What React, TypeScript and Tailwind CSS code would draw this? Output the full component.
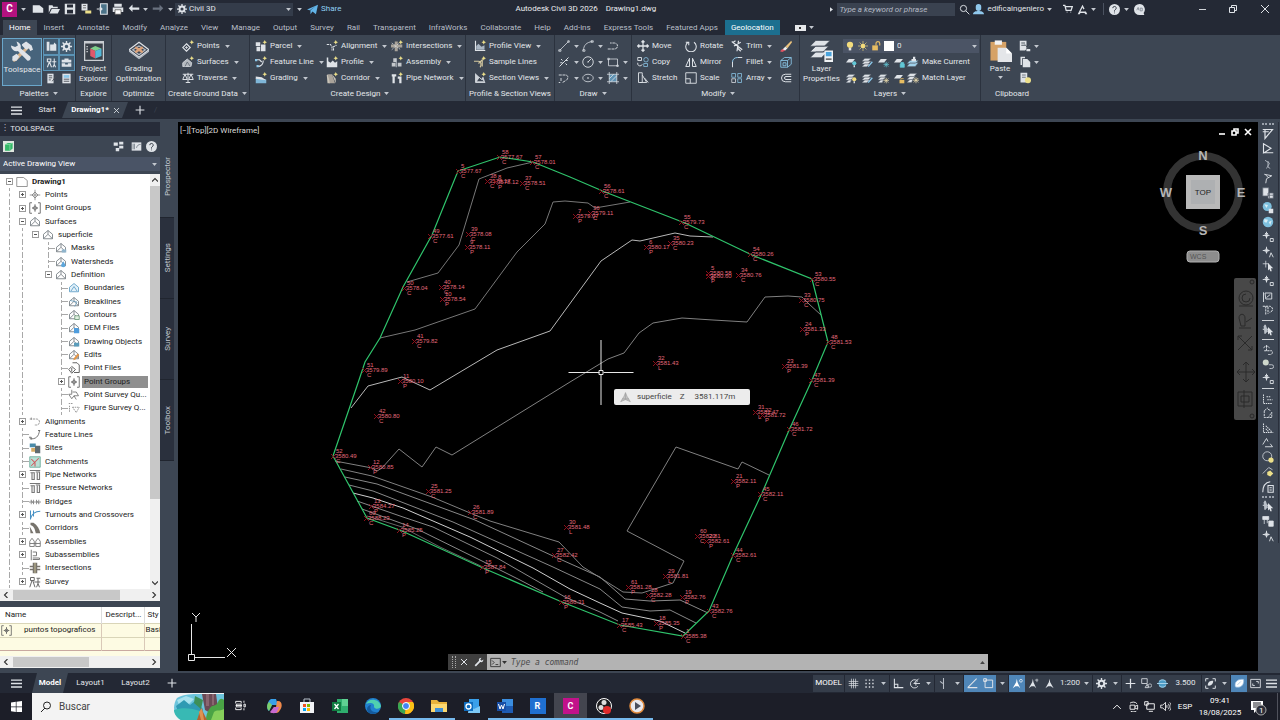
import React from 'react';
import clsx from 'clsx';

type IconProps = { name: string; className?: string };

const W = '#dfe3e8';
const B = '#8cc8ea';
const Y = '#ecdf8a';
const D = '#5b6470';

const spark = <path d="M13 0l1 2 2 1-2 1-1 2-1-2-2-1 2-1z" fill={Y} />;
const mound = (
  <path d="M2 13V7l6-5 6 5v6zM2 13l6-6 6 6M8 2v5" fill="none" stroke="#7b8288" strokeWidth="1.2" />
);
const star = <path d="M8 1v14M1 8h14M5 5l3-3 3 3-3 3zM5 11l3 3 3-3" fill="none" stroke={W} strokeWidth="1.2" />;

const icons: Record<string, React.ReactNode> = {
  new: <path d="M1 3h9l5 4v6H1z" fill={W} />,
  open: <path d="M1 13V3h5l1 2h6v2H4zM5 8h11l-3 6H2z" fill={W} />,
  save: <path d="M1 1h14v14H1zM4 2v4h8V2zM4 9v5h8V9z" fill={W} fillRule="evenodd" />,
  saveAs: (
    <>
      <path d="M2 1h8v9H2z" fill={W} />
      <path d="M4 3h4v1H4zM4 6h4v1H4z" fill="#555" />
      <path d="M7 10h8v4H7z" fill={Y} />
    </>
  ),
  web: <path d="M6 1h9v14H6zM1 8h7M5 5l3 3-3 3" fill="#4b7389" stroke={W} strokeWidth="1.5" />,
  print: (
    <>
      <path d="M3 1h10v4H3zM1 6h14v6H1z" fill={W} />
      <path d="M4 9h8v6H4z" fill="#fff" stroke="#555" />
    </>
  ),
  undo: <path d="M6 2L1 7l5 5V9h9V6H6z" fill={W} />,
  redo: <path d="M10 2l5 5-5 5V9H1V6h9z" fill="#69717f" />,
  gear: (
    <>
      <circle cx="8" cy="8" r="4" fill="none" stroke={W} strokeWidth="3" />
      <path d="M8 0v3M8 13v3M0 8h3M13 8h3M2.3 2.3l2 2M11.7 11.7l2 2M13.7 2.3l-2 2M4.3 11.7l-2 2" stroke={W} strokeWidth="2" />
    </>
  ),
  send: <path d="M0 8L16 1l-3 14-5-4-3 4V9l8-6-9 6z" fill="#62b4e8" />,
  search: <path d="M10 10l5 5M6.5 11a4.5 4.5 0 1 0 0-9 4.5 4.5 0 0 0 0 9z" fill="none" stroke={W} strokeWidth="1.4" />,
  user: <path d="M4 4a4 4 0 0 1 8 0v2a4 4 0 0 1-8 0zM0 15c0-4 4-5 8-5s8 1 8 5z" fill="#8fc7ec" />,
  cart: <path d="M0 2h3l2 8h8l2-6H4M6 13h1M12 13h1" fill="none" stroke={W} strokeWidth="2" />,
  autodesk: <path d="M8 1l3 6-2 1-1-3-3 6h8l2 4h-3l-1-2H5l-1 2H1z" fill={W} />,
  help: (
    <>
      <circle cx="8" cy="8" r="8" fill={W} />
      <path d="M5.5 6a2.5 2.5 0 1 1 3.5 2.3L8 9.5V11M8 12.5v1" fill="none" stroke="#2a303c" strokeWidth="1.3" />
    </>
  ),
  assistant: (
    <>
      <path d="M8 0a8 8 0 1 0 0 16h7l-1-3A8 8 0 0 0 8 0z" fill={W} />
      <path d="M4 9l2-4 1 4M9 6v4h3V6z" fill="none" stroke="#6d7580" />
    </>
  ),
  toolspace: (
    <>
      <path d="M11 5l2 1L4 15l-2 1-1-2z" fill="#d9b48b" />
      <path d="M8 3l3-2 4 3 1 3-2 1-1-2-2 1-3-3z" fill={W} />
      <path d="M4 1a4 4 0 0 1 3 5l7 6a2 2 0 0 1-2 3L5 8a4 4 0 0 1-5-4l3 1 2-1z" fill={W} />
      <path d="M1 12l3-2 2 2-2 3H1z" fill={W} />
    </>
  ),
  panorama: <path d="M1 1h4v13H1zM6 5h9v9H6zM10 8l2-6 3 3z" fill={W} />,
  survey: <path d="M2 3h5v4H2zM5 7l-3 8M5 7l3 8M12 2v3M9 7h6M12 5v6l-2 4M12 11l2 4" fill="none" stroke={W} strokeWidth="1.6" />,
  toolbox: <path d="M5 4V2h6v2h4v4H1V4zM1 9h5v2h4V9h5v5H1z" fill={W} />,
  notes: (
    <>
      <path d="M2 1h9v14H2z" fill={W} />
      <path d="M4 4h5M4 7h5M4 10h3M9 12l6-8" stroke="#4a4f57" strokeWidth="1.3" />
    </>
  ),
  props: (
    <>
      <path d="M2 1h12v14H2z" fill={W} />
      <path d="M4 3h8v4H4z" fill={B} />
      <path d="M4 9h8M4 12h8" stroke="#4a4f57" strokeWidth="1.3" />
    </>
  ),
  explorer: (
    <>
      <path d="M0 0h16v16H0z" fill="#c9cdd2" />
      <path d="M1 2h14v13H1z" fill="#3a4049" />
      <path d="M2 4h1v1H2zM2 6h1v1H2zM2 8h1v1H2z" fill={W} />
      <path d="M5 6l4-2 5 2-5 2z" fill="#7fd08c" />
      <path d="M5 6l4 2v6l-4-2z" fill="#e0586b" />
      <path d="M14 6L9 8v6l5-2z" fill="#54b8d8" />
    </>
  ),
  grading: (
    <>
      <path d="M8 1l8 6-8 6-8-6z" fill="none" stroke={W} />
      <path d="M8 4l5 3-5 4-5-4zM0 8l8 6 8-6" fill="none" stroke="#b7bcc4" />
      <path d="M5 5l3 2 3-2M5 9l3-2 3 2" fill="none" stroke="#dba27a" strokeWidth="2" />
    </>
  ),
  points: (
    <>
      <path d="M6 5l5 5-5 5-5-5z" fill="none" stroke={W} strokeWidth="1.5" />
      <path d="M4 10h4M6 8v4" stroke={W} />
      {spark}
    </>
  ),
  surfaces: (
    <>
      <path d="M1 14V9l6-5 6 5-1 5z" fill="#b3b8be" stroke={W} />
      <path d="M4 14l3-6 4 6" fill="none" stroke={D} />
      {spark}
    </>
  ),
  traverse: <path d="M1 3h14M8 1v13M5 14h6M4 3L1 10h6zM12 3l-3 7h6z" fill="none" stroke={W} strokeWidth="1.3" />,
  parcel: (
    <>
      <path d="M1 3h6v5H1zM8 6h6v9H8zM2 9h5v6H2z" fill={W} />
      {spark}
    </>
  ),
  feature: (
    <>
      <path d="M1 5h5l3 3M3 14c6 0 8-3 8-8" fill="none" stroke={W} strokeWidth="1.5" />
      <path d="M0 4h3v3H0zM2 12h3v3H2z" fill={B} />
      {spark}
    </>
  ),
  slope: (
    <>
      <path d="M1 8l14 2v5H1z" fill="#7fb6d8" />
      <path d="M1 6l8 1 6 4-14-2z" fill={W} />
      {spark}
    </>
  ),
  alignment: (
    <>
      <path d="M1 6h5l2 3v5M10 14V9l4-2" fill="none" stroke={W} strokeWidth="1.4" strokeDasharray="3 1" />
      {spark}
    </>
  ),
  profile: (
    <>
      <path d="M1 2v13h14V7l-3 2-3-3-3 3-3-2V2z" fill={W} />
      {spark}
    </>
  ),
  corridor: (
    <>
      <path d="M3 3h5l4 12H4z" fill="#a9a39a" />
      <path d="M1 4l2-1 2 12H2zM8 3l5 6v6z" fill="#c8c3b8" />
      {spark}
    </>
  ),
  intersect: (
    <>
      <path d="M5 2h4v13H5zM0 6h15v4H0z" fill="#a9a39a" />
      <path d="M1 4l12 9M1 13L12 3" stroke={W} strokeDasharray="2 1" />
      {spark}
    </>
  ),
  assembly: (
    <>
      <path d="M1 9h5v5H1zM9 9h5v5H9zM3 3h4v5H3z" fill="#c3c7cb" />
      <path d="M7 3v12" stroke={W} />
      {spark}
    </>
  ),
  pipe: (
    <>
      <path d="M1 3h6v3H5v9H2V6H1zM9 6h5v9h-3V9H9z" fill={W} />
      {spark}
    </>
  ),
  profileView: (
    <>
      <path d="M2 1v13h13" fill="none" stroke={W} strokeWidth="1.5" />
      <path d="M3 13V8l3-3 4 4 4-2v6z" fill="#a9b6c4" />
      {spark}
    </>
  ),
  sample: (
    <>
      <path d="M0 7h6c4 0 4 6 2 8M6 10l5-5v9" fill="none" stroke="#d5c9a0" strokeWidth="1.5" />
      {spark}
    </>
  ),
  section: (
    <>
      <path d="M2 2v12h13M3 13l4-6 3 3 2-3 2 6z" fill="#cdd2d8" stroke={W} />
      {spark}
    </>
  ),
  line: <path d="M2 14L14 2M1 13h3v2H1zM13 1h2v2h-2z" fill="none" stroke={W} />,
  arc: <path d="M2 14C2 7 6 3 14 2M1 13h3v2H1zM12 1h3v2h-3z" fill="none" stroke={W} />,
  pline: <path d="M1 12h9a4 4 0 0 0 0-8H4" fill="none" stroke={W} strokeWidth="1.2" strokeDasharray="4 1" />,
  xline: <path d="M2 14L14 2M4 4l2 2M10 10l2 2M3 9h3M10 6h3" fill="none" stroke={W} strokeWidth="1.3" />,
  circle: <path d="M8 1a7 7 0 1 0 0 14A7 7 0 0 0 8 1zM8 8l4-4M7 8h2" fill="none" stroke={W} strokeWidth="1.2" />,
  rect: <path d="M2 4h12v9H2zM1 3h2v2H1zM13 12h2v2h-2z" fill="none" stroke={W} />,
  spline: <path d="M1 4h9c4 0 4 5 1 7l-5 3M1 14h2M4 8v5" fill="none" stroke={W} strokeDasharray="4 1" strokeWidth="1.2" />,
  ellipse: (
    <>
      <ellipse cx="8" cy="8" rx="7" ry="5" fill="none" stroke={W} />
      <path d="M8 7v2M7 8h2" stroke={W} />
    </>
  ),
  hatch: (
    <>
      <path d="M3 3h10v10H3z" fill="#5f93b4" />
      <path d="M0 3h16M0 13h16M3 0v16M13 0v16M3 9l6-6M5 13l8-8" stroke={W} fill="none" />
    </>
  ),
  move: <path d="M8 1v14M1 8h14M6 3l2-2 2 2M6 13l2 2 2-2M3 6L1 8l2 2M13 6l2 2-2 2" fill="none" stroke={W} strokeWidth="1.7" />,
  copy: (
    <>
      <path d="M1 2h5v4H1zM1 9a3 3 0 1 0 6 2" fill="none" stroke={W} strokeWidth="1.2" />
      <circle cx="12" cy="5" r="3" fill="none" stroke={B} />
      <path d="M9 10h5v4H9z" fill="none" stroke={B} />
    </>
  ),
  stretch: <path d="M2 1v13h5V1zM7 4l6 10H4M10 8l5 6" fill="none" stroke={W} strokeWidth="1.2" />,
  rotate: <path d="M4 3a7 7 0 1 0 8 0M1 3h4v4" fill="none" stroke={W} strokeWidth="1.4" />,
  mirror: <path d="M6 3v11H1zM10 3v11h5z" fill="none" stroke={W} strokeWidth="1.3" />,
  scale: <path d="M1 1h14v14H1zM1 9h6v6" fill="none" stroke={W} strokeWidth="1.2" />,
  trim: <path d="M1 2l14 11M10 1L8 15M13 3l-9 5M3 3l3-2M9 11l4 4" fill="none" stroke={W} strokeWidth="1.6" />,
  fillet: (
    <>
      <path d="M2 15V8M9 2h6" stroke={W} strokeWidth="1.3" />
      <path d="M2 8c0-4 3-6 7-6" fill="none" stroke={B} strokeWidth="1.3" />
    </>
  ),
  array: (
    <>
      <path d="M1 9h5v5H1z" fill="none" stroke={W} />
      <path d="M1 2h5v5H1zM9 2h5v5H9zM9 9h5v5H9z" fill="none" stroke={B} />
    </>
  ),
  erase: (
    <>
      <path d="M15 1L7 9l3 2 6-8z" fill="#e9c27d" />
      <path d="M7 9l3 2-3 3-4-1z" fill="#f0f0f0" />
      <path d="M3 12l4 2-4 2-3-1z" fill="#dd5564" />
    </>
  ),
  cube: <path d="M1 6h9v9H1zM1 6l5-4h9v9l-5 4M15 2l-5 4M4 9h4v4H4z" fill="none" stroke={B} strokeWidth="1.1" />,
  offset: <path d="M15 3H7a5 5 0 0 0 0 10h8M15 6H8a2 2 0 0 0 0 4h7" fill="none" stroke={W} strokeWidth="1.3" />,
  layers: (
    <>
      <path d="M4 1h10l-4 4H0zM4 5h9l-4 4H0zM4 9h8l-4 4H0z" fill={W} stroke="#3d4653" strokeWidth=".5" />
      <path d="M10 8h6v8h-6z" fill="#f1f3f5" />
      <path d="M11 9h4v3h-4z" fill="#4aa3dc" />
      <path d="M11 14h4" stroke="#555" />
    </>
  ),
  bulb: (
    <>
      <circle cx="8" cy="6" r="5" fill="#f3dc7c" />
      <path d="M6 11h4v4H6z" fill="#e0e0e0" />
    </>
  ),
  sun: (
    <>
      <circle cx="8" cy="8" r="3.5" fill="#f3dc7c" />
      <path d="M8 0v16M0 8h16M2.5 2.5l11 11M13.5 2.5l-11 11" stroke="#f3dc7c" />
    </>
  ),
  lock: (
    <>
      <path d="M2 7h9v8H2z" fill="#e7bd62" />
      <path d="M8 7V4a3 3 0 0 1 6 0v3" fill="none" stroke="#e7bd62" strokeWidth="1.8" />
    </>
  ),
  swatch: <path d="M0 0h16v16H0z" fill="#fff" />,
  lyA: <><path d="M4 3h9l-4 5H0z" fill={W} /><circle cx="12" cy="9" r="3" fill="#62c7d6" /><path d="M11 12h2v3h-2z" fill={W} /></>,
  lyB: <><path d="M4 2h9l-4 4H0zM4 6h9l-4 4H0zM4 10h7l-4 4H0z" fill={W} stroke={D} strokeWidth=".6" /><path d="M9 14l6-7" stroke={B} strokeWidth="2" /></>,
  lyC: <><path d="M4 3h9l-4 5H0z" fill={W} /><path d="M12 7v8M8 11h8M9 8l6 6M15 8l-6 6" stroke="#62c7d6" /></>,
  lyD: <><path d="M4 3h9l-4 5H0z" fill={W} /><path d="M9 10h6v5H9zM10 10V8h4v2" fill="#62c7d6" stroke="#62c7d6" /></>,
  lyE: <><path d="M4 9h11l-4 5H0zM4 6h11l-4 4H0z" fill="#9fd0ea" stroke={D} strokeWidth=".6" /><path d="M6 4h6v3H6zM8 1h3v4H8z" fill={W} /></>,
  lyF: <><path d="M4 2h9l-4 4H0zM4 6h7l-4 4H0zM4 10h4l-2 4H0z" fill={W} stroke={D} strokeWidth=".6" /><circle cx="12" cy="9" r="3" fill="#f3dc7c" /><path d="M11 12h2v3h-2z" fill={W} /></>,
  lyG: <><path d="M4 2h9l-4 4H0zM4 6h7l-4 4H0zM4 10h4l-2 4H0z" fill={W} stroke={D} strokeWidth=".6" /><path d="M12 7v8M8 11h8M9 8l6 6M15 8l-6 6" stroke="#f0e0b0" /></>,
  lyH: <><path d="M4 3h9l-4 5H0z" fill={W} /><path d="M8 10h7v5H8z" fill="#e7bd62" /><path d="M10 10V8h4" fill="none" stroke="#e7bd62" /></>,
  paste: (
    <>
      <path d="M1 2h11v13H1z" fill="#d6a266" />
      <path d="M4 1h5v3H4z" fill="#f2f2f2" />
      <path d="M6 6h6l4 4v6H6z" fill="#e4e6e9" />
      <path d="M12 6v4h4z" fill="#fff" />
    </>
  ),
  cut: <><path d="M1 1h9v13H1z" fill={W} /><path d="M3 4h5M3 7h5M8 6l7 9M15 6l-7 9" stroke="#4d5560" strokeWidth="1.3" /><path d="M10 12h5v3h-5z" fill={W} /></>,
  copyclip: <path d="M2 1h6v2H4v9H2zM5 4h6l4 4v7H5z" fill={W} />,
  pasteSp: <><path d="M2 1h9v13H2z" fill={W} /><path d="M4 4h5M4 7h5" stroke="#4d5560" /><circle cx="12" cy="11" r="4" fill={Y} /></>,
  // toolspace tree
  dwg: <path d="M1 2h9l5 4v8H1z" fill="#fff" stroke="#777" />,
  tPoints: <path d="M8 1v14M1 8h14M8 4l4 4-4 4-4-4z" fill="none" stroke="#777" />,
  tGroups: <path d="M4 1H1v14h3M12 1h3v14h-3M8 3v10M4 8h8M8 5l3 3-3 3-3-3z" fill="none" stroke="#666" strokeWidth="1.2" />,
  tSurf: mound,
  tMask: <>{mound}<path d="M9 10h6v4H9z" fill="#8fb4cc" /></>,
  tWater: <>{mound}<path d="M11 7l3 5a3 3 0 1 1-6 0z" fill="#5ea7dc" /></>,
  tBound: <path d="M2 13V7l6-5 6 5v6zM4 12l4-6 4 6" fill="#e3f1fa" stroke="#4a91bd" />,
  tBreak: <>{mound}<path d="M3 6l9 2-3 6" fill="none" stroke="#5b93b5" /></>,
  tCont: <>{mound}<path d="M9 9h6v5H9z" fill="#dff0df" stroke="#5f8e6d" /></>,
  tDem: <>{mound}<path d="M8 8h5l2 2v5H8z" fill="#4f9ddd" /></>,
  tObj: <>{mound}<path d="M8 9h7v5H8z" fill="#5a9cbb" /></>,
  tEdit: <>{mound}<path d="M15 8l-5 6-3 1 1-3 5-6z" fill="#e29548" /></>,
  tFile: <path d="M6 1h6l3 3v10H8M1 10l4-4 5 4-5 5zM5 8v5" fill="none" stroke="#555" strokeWidth="1.2" />,
  tQuery: <path d="M5 1v6H1l4 6 3-4h6l-3-5H6M8 9l3 5" fill="none" stroke="#777" strokeWidth="1.2" />,
  tFigure: <path d="M1 2h6M2 5v9M6 7h9l-4 7z" fill="none" stroke="#777" strokeDasharray="2 1" />,
  tAlign: <path d="M1 4h9a4 4 0 0 1 0 8H7M3 2v4" fill="none" stroke="#777" strokeDasharray="3 1" />,
  tFeat: <path d="M1 13c8 1 12-3 13-11M0 11h3v3M12 2h3" fill="none" stroke="#666" strokeWidth="1.2" />,
  tSites: <><path d="M1 2h8v5H1z" fill="#4a8ba8" /><path d="M8 5h7v10H8z" fill="#5f6b70" /><path d="M3 8h5v5H3z" fill="#d5a962" /></>,
  tCatch: <><path d="M1 1h14v14H1z" fill="#b9e0d5" stroke="#5aa08e" /><path d="M3 13L13 3M3 4l5 5v5" stroke="#d0575c" strokeWidth="1.4" fill="none" /></>,
  tPipe: <path d="M1 2h14M2 5h5v9H4V5M9 4h5v10h-3V5" fill="none" stroke="#777" strokeWidth="1.5" />,
  tBridge: <path d="M0 8h16M3 5v6M6 5v6M10 5v6M13 5v6M3 6l3 4M10 6l3 4" fill="none" stroke="#777" />,
  tTurn: <path d="M2 2v12M2 13C4 6 8 3 15 3M6 2v8" fill="none" stroke="#4590c4" strokeWidth="1.4" />,
  tCorr: <path d="M2 1h4c5 3 8 8 9 14H9C8 9 6 5 2 4zM1 6l5 9H2z" fill="#77736c" />,
  tAsm: <path d="M1 14V7l3-4 3 4v7zM9 14V7l3-4 3 4v7zM1 10h14" fill="none" stroke="#777" strokeWidth="1.2" />,
  tSub: <path d="M3 1v14M5 4h5v5H5M5 12h9v2H5" fill="none" stroke="#777" strokeWidth="1.3" />,
  tInt: <><path d="M1 5h14v2H1zM1 9h14v2H1zM5 1h6v14H5z" fill="#77736c" /><path d="M8 1v14" stroke="#e0d5a0" /></>,
  tSurvey: <path d="M2 2h5v4H2zM4 6l-3 9M5 6l3 9M10 3h5M12 3v7l-2 5M12 10l2 5M7 8h8" fill="none" stroke="#666" strokeWidth="1.3" />,
  refresh: <><path d="M0 0h16v16H0z" fill="#dfe6df" /><path d="M3 5l4-2h7v8l-4 3H3z" fill="#35b868" /><path d="M3 5h7l4-2M10 5v9" stroke="#8fe0ae" fill="none" /></>,
  tree: <path d="M1 2h6v5H1zM9 1h6v4H9zM9 7h6v4H9zM4 10h5v5H4z" fill={W} />,
  panel: <><path d="M1 2h14v12H1z" fill={W} /><path d="M3 4v8M5 4v8M8 10c1-4 3-5 6-5" stroke={D} fill="none" /></>,
  // right toolbar
  r0: <path d="M1 2h13L4 14V2M1 5h8" fill="none" stroke={W} strokeWidth="1.6" />,
  r1: <path d="M2 14V1l10 6-9 6h12" fill="none" stroke={W} strokeWidth="1.5" />,
  r2: <path d="M4 3l6 4-4 7M8 4v8l3 2" fill="none" stroke="#aab1ba" strokeWidth="1.3" />,
  r3: <path d="M3 3l10 2-7 4-1 6M5 4l4 4" fill="none" stroke={W} strokeWidth="1.2" />,
  r4: <path d="M1 1h8v11H1zM8 8h7v7H8zM10 8v7M8 11h7" fill={W} stroke={D} />,
  r5: <><circle cx="7" cy="6" r="6" fill="#7ec0de" /><path d="M3 3l5 1-2 4z" fill="#d8edf5" /><path d="M9 9h6v6H9z" fill={W} /></>,
  r6: <><circle cx="8" cy="8" r="7" fill="#7ec0de" /><path d="M3 4l5 1-2 4-3-1zM9 8l4-2-2 6z" fill="#d8edf5" /></>,
  r7: <path d="M6 1v9M1 6h9M4 4l2-2 2 2-2 5zM11 10h4v4h-4z" fill="none" stroke={W} strokeWidth="1.2" />,
  r8: <path d="M6 1v9M1 6h9M6 3l3 3-3 3-3-3zM10 15l2-6 3 6" fill="none" stroke={W} strokeWidth="1.2" />,
  r9: <><path d="M5 1v9M1 5h8" stroke={W} /><path d="M8 4l7 7-3 0 1 4-2 0-1-3-2 2z" fill={W} /></>,
  r10: <path d="M2 3v13M4 4h9v8H5zM6 10l5-4" fill="none" stroke={W} strokeWidth="1.2" />,
  r11: <path d="M1 3h9a4 4 0 0 1 0 8M5 3v11M8 4v9" fill="none" stroke={W} strokeDasharray="3 1" strokeWidth="1.3" />,
  r12: <><path d="M4 1v12M1 7h8" stroke={W} strokeWidth="1.5" /><path d="M2 3l3-2 3 9-4 3z" fill="#b9c0c8" /><path d="M8 4l7 7-3 0 1 4-2 0-1-3-2 2z" fill={W} /></>,
  r13: <path d="M2 5l4-3 4 3M3 9h10a3 3 0 0 1-3 5H8M6 2v7" fill="none" stroke={W} strokeDasharray="3 1" strokeWidth="1.3" />,
  r14: <><circle cx="5" cy="6" r="4" fill="#cfd8cc" /><path d="M9 9h4a2 2 0 0 1 0 5h-3" fill="none" stroke={W} /></>,
  r15: <path d="M2 2v12h12M6 5h5M7 9h7" fill="none" stroke={W} strokeDasharray="2 1" strokeWidth="1.3" />,
  r16: <path d="M3 5v9h10V7l-4 6M3 5l5-4M8 3l4 2" fill="none" stroke={W} strokeDasharray="3 1" strokeWidth="1.2" />,
  r17: <path d="M2 2v12h13M5 5l8 8M5 9l4 4" fill="none" stroke={W} strokeDasharray="2 1" strokeWidth="1.4" />,
  r18: <path d="M1 10l5-8 2 4M4 13h10l-3-4" fill="none" stroke={W} strokeWidth="1.2" />,
  r19: <><circle cx="7" cy="7" r="6" fill="none" stroke={W} /><circle cx="12" cy="12" r="3.5" fill={Y} /></>,
  r20: <><path d="M1 10l8-8 5 3" fill="none" stroke={W} /><path d="M7 8l4-2 4 4-4 4-4-2z" fill={Y} /></>,
  r21: <path d="M1 15C1 7 4 2 11 1M8 6h7v9H8zM10 9h3M10 12h3" fill="none" stroke={W} strokeWidth="1.4" />,
  r22: <path d="M1 2h8v4H1zM3 6v6M7 6v5M9 8h6v7H9zM11 8v7M13 8v7" fill={W} stroke={W} />,
  // status bar
  grid: <path d="M5 1v14M11 1v14M1 5h14M1 11h14M8 1v14M1 8h14" stroke={W} fill="none" />,
  dots: <path d="M2 3h2M7 3h2M12 3h2M2 8h2M7 8h2M12 8h2M2 13h2M7 13h2M12 13h2" stroke={W} strokeWidth="2" />,
  ortho: <path d="M2 1v13h13M2 9h5v5" fill="none" stroke={W} strokeWidth="1.5" />,
  polar: <path d="M13 5a6 6 0 1 0 0 7M7 8h9M7 8l7-7M10 5v6" fill="none" stroke={W} strokeWidth="1.3" />,
  iso: <path d="M8 0v16M3 5l4 3" fill="none" stroke="#b8bec7" strokeWidth="1.5" />,
  track: <path d="M1 14L14 1M1 14h14" fill="none" stroke={W} strokeWidth="1.5" />,
  osnap: <path d="M3 3h11v11H3zM1 1h4v4H1z" fill="none" stroke={W} strokeWidth="1.4" />,
  ann: <path d="M8 1l1 5 5 9-4-3H6l-4 3 5-9z" fill={W} />,
  annVis: <><path d="M7 1l1 5 4 9-3-3H5l-4 3 5-9z" fill="#fff" /><circle cx="13" cy="4" r="2" fill="none" stroke="#fff" /></>,
  annAdd: <><path d="M7 1l1 5 4 9-3-3H5l-4 3 5-9z" fill={W} /><path d="M13 1l0 5M10 3h5" stroke={W} /></>,
  plus: <path d="M8 1v14M1 8h14" stroke={W} strokeWidth="1.8" />,
  shapes: <><path d="M1 1h8v7H1zM6 14l3-5 2 5z" fill="none" stroke={W} strokeWidth="1.2" /><circle cx="13" cy="11" r="2.5" fill="none" stroke={W} /></>,
  globe: <><circle cx="8" cy="8" r="6" fill="#4d9cc6" /><path d="M3 5c3-3 7-3 10 0M3 11c3 3 7 3 10 0M0 8h16" fill="none" stroke="#b4daee" strokeWidth="1.3" /></>,
  isolate: <><path d="M1 5V1h4M11 1h4v4M15 11v4h-4M5 15H1v-4" fill="none" stroke={W} strokeWidth="1.4" /><path d="M4 11c0-5 3-7 8-7 0 5-3 8-8 7z" fill={W} /></>,
  leaf: <path d="M2 13C0 6 5 1 14 2c1 8-4 13-12 11zM5 10l5-5" fill="#fff" stroke="#8fb8dd" />,
  screen: <path d="M1 2h14v12H1zM4 11V8M4 11h3M12 5v3M12 5H9" fill="none" stroke={W} strokeWidth="1.3" />,
  menu: <path d="M0 3h16M0 8h16M0 13h16" stroke={W} strokeWidth="2" />,
  wrench: <path d="M1 13l7-7c-1-3 1-5 4-5L10 4l2 2 3-2c0 3-2 5-5 4l-7 7z" fill={W} />,
  prompt: <path d="M1 2h14v12H1zM3 5l3 3-3 3M8 11h4" fill="none" stroke="#333" strokeWidth="1.3" />,
  tri: <path d="M8 1l2 5 5 8-7-3-7 3 5-8zM8 1v10M3 10h10" fill="#c2c2c2" stroke="#a2a2a2" />,
  // taskbar
  windows: <path d="M0 2l7-1v7H0zM8 1l8-1v8H8zM0 9h7v7l-7-1zM8 9h8v7H8z" fill="#fff" />,
  taskview: <path d="M1 2v3M1 2h8v3M1 14v-3M1 14h8v-3M1 8h9v0M13 1v3M13 6v4h2V6zM13 12v3M2 6h7v4H2z" fill="none" stroke="#fff" strokeWidth="1.3" />,
  copilot: <><path d="M5 1h5l2 6H6L3 13C0 12 1 3 5 1z" fill="#3aa0e8" /><path d="M11 3c5-1 6 5 3 9-1 2-2 3-4 3H5L8 9h2z" fill="#f08a4b" /><path d="M8 9h5l-2 5c-1 2-7 1-7 0z" fill="#c86ad0" /><path d="M3 4l3 3-3 6c-3-3-2-7 0-9z" fill="#7ccf6a" /></>,
  store: <><path d="M1 4h14v11H1z" fill="#f1f3f6" /><path d="M5 4V1h6v3" fill="none" stroke="#b8c2cc" /><path d="M4 6h3v3H4z" fill="#f25022" /><path d="M8 6h3v3H8z" fill="#7fba00" /><path d="M4 10h3v3H4z" fill="#00a4ef" /><path d="M8 10h3v3H8z" fill="#ffb900" /></>,
  excel: <><path d="M5 1h11v14H5z" fill="#2fae6e" /><path d="M10 1h6v7h-6z" fill="#5fd092" /><path d="M0 4h9v9H0z" fill="#107c41" /><path d="M2.5 6l4 5M6.5 6l-4 5" stroke="#fff" strokeWidth="1.3" /></>,
  edge: <><circle cx="8" cy="8" r="8" fill="#2180cf" /><path d="M1 6C3 0 14 0 16 8c0 3-6 4-7 1 1-4-4-5-8-3z" fill="#4fd0b0" /><path d="M6 7c-2 4 1 8 7 7-5 4-11 1-11-3 0-2 2-4 4-4z" fill="#145a9e" /></>,
  chrome: <><circle cx="8" cy="8" r="8" fill="#e8453c" /><path d="M8 8l-7-4a8 8 0 0 0 6 12z" fill="#38a852" /><path d="M8 8l-1 8a8 8 0 0 0 8-12H8z" fill="#fbc116" /><circle cx="8" cy="8" r="3.5" fill="#4285f4" stroke="#fff" /></>,
  folder: <><path d="M0 2h6l2 2h8v10H0z" fill="#e8b33c" /><path d="M0 6h16v8H0z" fill="#fbd871" /><path d="M4 10h8v4H4z" fill="#3e90d8" /></>,
  outlook: <><path d="M5 1h10v10H5z" fill="#3aa0ea" /><path d="M5 8l5 3 6-3v7H4z" fill="#7cc8f5" /><path d="M0 4h9v9H0z" fill="#0f6cbd" /><circle cx="4.5" cy="8.5" r="2.5" fill="none" stroke="#fff" strokeWidth="1.3" /></>,
  word: <><path d="M5 1h11v14H5z" fill="#3b8ee0" /><path d="M5 8h11v7H5z" fill="#1e5cb3" /><path d="M0 4h9v9H0z" fill="#174ea6" /><path d="M1.5 6l1.5 5 1.5-4 1.5 4 1.5-5" fill="none" stroke="#fff" /></>,
  player: <><circle cx="8" cy="8" r="7" fill="#e9e9ee" stroke="#e08a3c" strokeWidth="1.5" /><path d="M6 4l6 4-6 4z" fill="#4b4f5c" /></>,
  obs: <><circle cx="8" cy="8" r="7.5" fill="#1c1c1e" stroke="#fff" /><circle cx="8" cy="4.5" r="2.5" fill="#ddd" /><circle cx="5" cy="9.5" r="2.5" fill="#ddd" /><circle cx="11" cy="12" r="4" fill="#e02b2b" /></>,
  meet: <path d="M3 6h7v6H3zM10 8l4-2v6l-4-2M3 3c3-2 8-2 10 1M4 15c3 1 6 1 8 0" fill="none" stroke="#fff" strokeWidth="1.3" />,
  net: <path d="M4 4h11v8H4zM7 15h6M1 1h5v5H1z" fill="#1e202b" stroke="#fff" strokeWidth="1.3" />,
  sound: <path d="M1 6h3l4-4v12l-4-4H1zM10 6v4M12 4c2 2 2 6 0 8M14 2c3 3 3 9 0 12" fill="none" stroke="#fff" strokeWidth="1.2" />,
  up: <path d="M2 11l6-6 6 6" fill="none" stroke="#fff" strokeWidth="1.5" />,
};

const Icon: React.FC<IconProps> = ({ name, className = 'size-3' }) => (
  <svg viewBox="0 0 16 16" className={clsx('shrink-0', className)} aria-hidden="true">
    {icons[name] ?? star}
  </svg>
);

const Caret: React.FC<{ className?: string }> = ({ className = 'text-[#c3c8cf]' }) => (
  <svg viewBox="0 0 8 5" className={clsx('w-[5px] h-[3px] shrink-0', className)} aria-hidden="true">
    <path d="M0 0h8L4 5z" fill="currentColor" />
  </svg>
);

const IconButton: React.FC<{ name: string; label: string; className?: string; icon?: string }> = ({
  name,
  label,
  className = '',
  icon,
}) => (
  <button type="button" aria-label={label} className={clsx('flex items-center justify-center shrink-0', className)}>
    <Icon name={name} className={icon} />
  </button>
);

const TitleBar = () => (
  <header className="flex h-[18px] shrink-0 items-center justify-between pr-[10px]">
    <div className="flex items-center">
      <button type="button" aria-label="Application menu" className="flex items-center gap-1 pl-[2px] w-[30px]">
        <span className="flex size-[15px] items-center justify-center bg-[#b3127f] text-[10px] font-bold leading-none text-white">
          C
        </span>
        <Caret />
      </button>
      {['new', 'open', 'save', 'saveAs', 'web', 'print', 'undo'].map((name) => (
        <IconButton key={name} name={name} label={name} className="w-4" />
      ))}
      <span className="flex w-[7px] justify-center"><Caret /></span>
      <IconButton name="redo" label="redo" className="w-[17px]" />
      <span className="flex w-[9px] justify-center"><Caret /></span>
      <div className="flex h-[13px] w-[118px] items-center bg-[#343c4a] px-[2px]">
        <Icon name="gear" className="size-[10px]" />
        <select aria-label="Workspace" className="ml-[2px] h-[13px] flex-1 appearance-none bg-transparent leading-3">
          <option>Civil 3D</option>
        </select>
        <Caret />
      </div>
      <span className="flex w-3 justify-center"><Caret /></span>
      <button type="button" className="flex items-center gap-[3px] pl-[2px] text-[#8fd0f4]">
        <Icon name="send" className="size-[11px]" />
        Share
      </button>
    </div>
    <div className="flex gap-2 text-[#eceef1]">
      <span>Autodesk Civil 3D 2026</span>
      <span>Drawing1.dwg</span>
    </div>
    <div className="flex items-center">
      <svg viewBox="0 0 4 6" className="mr-1 h-[5px] w-[3px]" aria-hidden="true">
        <path d="M0 0l4 3-4 3z" fill={W} />
      </svg>
      <input
        aria-label="Search help"
        placeholder="Type a keyword or phrase"
        className="h-[13px] w-[118px] bg-[#3a4250] px-[2px] italic placeholder:text-[#b4bac4]"
      />
      <IconButton name="search" label="Search" className="w-[18px]" icon="size-[11px]" />
      <button type="button" className="flex items-center gap-[3px]">
        <Icon name="user" className="size-[11px]" />
        edificaingeniero
        <Caret />
      </button>
      <IconButton name="cart" label="Store" className="ml-[7px] w-[18px]" icon="size-[10px]" />
      <IconButton name="autodesk" label="Apps" className="w-3" icon="size-[11px]" />
      <span className="flex w-[10px] justify-center"><Caret /></span>
      <span className="mx-1 h-3 w-px bg-[#4b5260]" />
      <IconButton name="help" label="Help" className="w-[14px]" icon="size-[11px]" />
      <span className="flex w-[10px] justify-center"><Caret /></span>
      <IconButton name="assistant" label="Assistant" className="w-4" icon="size-[11px]" />
      <button type="button" aria-label="Minimize" className="ml-12 mr-4 flex h-3 w-[14px] items-center justify-center">
        <span className="h-px w-[7px] bg-[#cfd3d8]" />
      </button>
      <button type="button" aria-label="Restore" className="mr-5 flex w-[14px] justify-center">
        <svg viewBox="0 0 8 8" className="size-2"><path d="M.5 2.5h5v5h-5zM2.5 2V.5h5v5H6" fill="none" stroke={W} /></svg>
      </button>
      <button type="button" aria-label="Close" className="flex w-[10px] justify-center">
        <svg viewBox="0 0 8 8" className="size-2"><path d="M0 0l8 8M8 0L0 8" stroke={W} /></svg>
      </button>
    </div>
  </header>
);

const ribbonTabs = [
  'Home', 'Insert', 'Annotate', 'Modify', 'Analyze', 'View', 'Manage', 'Output', 'Survey', 'Rail',
  'Transparent', 'InfraWorks', 'Collaborate', 'Help', 'Add-ins', 'Express Tools', 'Featured Apps', 'Geolocation',
];

const RibbonTabs = () => (
  <nav className="mt-[2px] flex h-[15px] shrink-0 items-stretch gap-px pl-[3px]">
    {ribbonTabs.map((tab) => (
      <button
        key={tab}
        type="button"
        className={clsx(
          'px-[6px] text-[#b9bfc8]',
          tab === 'Home' && 'bg-[#3d4653] text-white',
          tab === 'Geolocation' && 'bg-[#1c6f8f] text-white',
        )}
      >
        {tab}
      </button>
    ))}
    <button type="button" aria-label="Minimize ribbon" className="ml-[14px] flex items-center gap-[3px]">
      <span className="flex h-[6px] w-[11px] items-center justify-center bg-[#e6e8eb]">
        <span className="size-[2px] bg-[#333]" />
      </span>
      <Caret />
    </button>
  </nav>
);

type Cmd = [icon: string, label: string, caret?: boolean];

const Command: React.FC<{ cmd: Cmd }> = ({ cmd: [icon, label, caret] }) => (
  <button type="button" className="flex h-4 items-center gap-[3px] whitespace-nowrap">
    <Icon name={icon} className="size-[12px]" />
    {label}
    {caret && <span className="pl-[2px]"><Caret /></span>}
  </button>
);

const Column: React.FC<{ cmds: Cmd[]; className?: string }> = ({ cmds, className }) => (
  <div className={clsx('flex flex-col', className)}>
    {cmds.map((cmd) => <Command key={cmd[1]} cmd={cmd} />)}
  </div>
);

const Panel: React.FC<{ title: string; caret?: boolean; className?: string; children: React.ReactNode }> = ({
  title,
  caret,
  className,
  children,
}) => (
  <section className={clsx('flex shrink-0 flex-col border-r border-[#2b323e] pt-[3px]', className)}>
    <div className="flex h-12">{children}</div>
    <h2 className="flex h-[15px] items-center justify-center gap-1 whitespace-nowrap">
      {title}
      {caret && <Caret />}
    </h2>
  </section>
);

const BigButton: React.FC<{ icon: string; lines: string[]; className?: string; size?: string }> = ({
  icon,
  lines,
  className,
  size = 'size-[22px]',
}) => (
  <button type="button" className={clsx('flex flex-col items-center justify-start text-center', className)}>
    <Icon name={icon} className={size} />
    {lines.map((line) => <span key={line} className="h-[10px] leading-[10px]">{line}</span>)}
  </button>
);

const drawTools = ['line', 'arc', 'pline', 'xline', 'circle', 'rect', 'spline', 'ellipse', 'hatch'];

const Ribbon = () => (
  <div className="flex h-[66px] shrink-0 bg-[#3d4653] text-[#e3e6ea]">
    <Panel title="Palettes" caret className="w-[76px] pl-[2px]">
      <BigButton
        icon="toolspace"
        lines={['Toolspace']}
        className="w-10 border border-[#6aa7cb] bg-[#47647c] gap-[3px] pt-px"
      />
      <div className="grid w-8 grid-cols-2 pl-[1px]">
        {['panorama', 'gear', 'survey', 'toolbox', 'notes', 'props'].map((name, i) => (
          <IconButton
            key={name}
            name={name}
            label={name}
            icon="size-[11px]"
            className={clsx('w-4', i < 4 && 'border border-[#5b93b5] bg-[#425b70]')}
          />
        ))}
      </div>
    </Panel>
    <Panel title="Explore" className="w-9">
      <BigButton icon="explorer" lines={['Project', 'Explorer']} className="w-full pt-[3px]" size="size-5 mb-[3px]" />
    </Panel>
    <Panel title="Optimize" className="w-[54px]">
      <BigButton icon="grading" lines={['Grading', 'Optimization']} className="w-full pt-[3px]" size="size-5 mb-[3px]" />
    </Panel>
    <Panel title="Create Ground Data" caret className="w-[84px]">
      <Column
        className="pl-4"
        cmds={[['points', 'Points', true], ['surfaces', 'Surfaces', true], ['traverse', 'Traverse', true]]}
      />
    </Panel>
    <Panel title="Create Design" caret className="w-[216px] pl-[5px]">
      <Column
        className="w-[71px]"
        cmds={[['parcel', 'Parcel', true], ['feature', 'Feature Line', true], ['slope', 'Grading', true]]}
      />
      <Column
        className="w-[65px]"
        cmds={[['alignment', 'Alignment', true], ['profile', 'Profile', true], ['corridor', 'Corridor', true]]}
      />
      <Column
        cmds={[['intersect', 'Intersections', true], ['assembly', 'Assembly', true], ['pipe', 'Pipe Network', true]]}
      />
    </Panel>
    <Panel title="Profile & Section Views" className="w-[89px]">
      <Column
        className="pl-2"
        cmds={[['profileView', 'Profile View', true], ['sample', 'Sample Lines'], ['section', 'Section Views', true]]}
      />
    </Panel>
    <Panel title="Draw" caret className="w-[77px]">
      <div className="grid grid-cols-3 pl-[3px]">
        {drawTools.map((name) => (
          <button key={name} type="button" aria-label={name} className="flex w-[26px] items-center gap-1">
            <Icon name={name} className="size-[12px]" />
            {name !== 'pline' && <Caret />}
          </button>
        ))}
      </div>
    </Panel>
    <Panel title="Modify" caret className="w-[168px] pl-[5px]">
      <Column className="w-12" cmds={[['move', 'Move'], ['copy', 'Copy'], ['stretch', 'Stretch']]} />
      <Column className="w-[46px]" cmds={[['rotate', 'Rotate'], ['mirror', 'Mirror'], ['scale', 'Scale']]} />
      <Column className="w-9" cmds={[['trim', 'Trim'], ['fillet', 'Fillet'], ['array', 'Array']]} />
      <div className="flex w-[13px] flex-col">
        {[0, 1, 2].map((i) => <span key={i} className="flex h-4 items-center"><Caret /></span>)}
      </div>
      <div className="flex flex-col">
        {['erase', 'cube', 'offset'].map((name) => <IconButton key={name} name={name} label={name} className="h-4" />)}
      </div>
    </Panel>
    <Panel title="Layers" caret className="w-[181px]">
      <BigButton icon="layers" lines={['Layer', 'Properties']} className="w-[43px] pt-[1px]" size="size-[23px] mb-[2px]" />
      <div className="flex flex-1 flex-col">
        <div className="mt-[1px] mb-px flex h-[14px] w-[136px] items-center gap-[3px] bg-[#4b5465] px-[2px]">
          {['bulb', 'sun', 'lock', 'swatch'].map((name) => <Icon key={name} name={name} className="size-[10px]" />)}
          <select aria-label="Layer" className="h-[14px] flex-1 appearance-none bg-transparent leading-3">
            <option>0</option>
          </select>
          <Caret />
        </div>
        {[
          ['lyA', 'lyB', 'lyC', 'lyD', 'lyE', 'Make Current'],
          ['lyF', 'lyB', 'lyG', 'lyH', 'lyG', 'Match Layer'],
        ].map((row) => (
          <div key={row[5]} className="flex h-4 items-center whitespace-nowrap">
            {row.slice(0, 4).map((name) => (
              <IconButton key={name} name={name} label={name} className="w-4" icon="size-[11px]" />
            ))}
            <button type="button" className="flex items-center gap-[3px]">
              <Icon name={row[4]} className="size-[12px]" />
              {row[5]}
            </button>
          </div>
        ))}
      </div>
    </Panel>
    <section className="flex w-[62px] flex-col pt-[3px]">
      <div className="flex h-12">
        <button type="button" className="ml-[7px] flex w-6 flex-col items-center justify-start">
          <Icon name="paste" className="mt-[1px] mb-[2px] size-[23px]" />
          <span className="mb-[2px] leading-[10px]">Paste</span>
          <Caret />
        </button>
        <div className="ml-[7px] flex flex-col">
          {['cut', 'copyclip', 'pasteSp'].map((name, i) => (
            <button key={name} type="button" aria-label={name} className="flex h-4 items-center gap-[3px]">
              <Icon name={name} className="size-[12px]" />
              {i < 2 && <Caret />}
            </button>
          ))}
        </div>
      </div>
      <h2 className="flex h-[15px] items-center justify-center">Clipboard</h2>
    </section>
  </div>
);

const DocumentTabs = () => (
  <div className="flex h-[18px] shrink-0 items-center">
    <IconButton name="menu" label="Documents" className="w-8" icon="size-[11px]" />
    <button type="button" className="w-[30px] text-center">Start</button>
    <div className="flex h-4 w-[66px] items-center justify-center gap-[5px] bg-[#3d4653] [clip-path:polygon(6px_0,100%_0,calc(100%-6px)_100%,0_100%)]">
      <button type="button" className="font-bold text-white">Drawing1*</button>
      <button type="button" aria-label="Close Drawing1" className="flex">
        <svg viewBox="0 0 6 6" className="size-[5px]"><path d="M0 0l6 6M6 0L0 6" stroke={W} /></svg>
      </button>
    </div>
    <IconButton name="plus" label="New drawing" className="ml-[6px] w-3" icon="size-[10px]" />
    <span className="ml-2 text-[#3b4351]">/</span>
  </div>
);

type Node = [depth: number, icon: string, label: string, exp?: '+' | '-'];

const tree: Node[] = [
  [0, 'dwg', 'Drawing1', '-'],
  [1, 'tPoints', 'Points', '+'],
  [1, 'tGroups', 'Point Groups', '+'],
  [1, 'tSurf', 'Surfaces', '-'],
  [2, 'tSurf', 'superficie', '-'],
  [3, 'tMask', 'Masks'],
  [3, 'tWater', 'Watersheds'],
  [3, 'tSurf', 'Definition', '-'],
  [4, 'tBound', 'Boundaries'],
  [4, 'tBreak', 'Breaklines'],
  [4, 'tCont', 'Contours'],
  [4, 'tDem', 'DEM Files'],
  [4, 'tObj', 'Drawing Objects'],
  [4, 'tEdit', 'Edits'],
  [4, 'tFile', 'Point Files'],
  [4, 'tGroups', 'Point Groups', '+'],
  [4, 'tQuery', 'Point Survey Qu...'],
  [4, 'tFigure', 'Figure Survey Q...'],
  [1, 'tAlign', 'Alignments', '+'],
  [1, 'tFeat', 'Feature Lines'],
  [1, 'tSites', 'Sites'],
  [1, 'tCatch', 'Catchments'],
  [1, 'tPipe', 'Pipe Networks', '+'],
  [1, 'tPipe', 'Pressure Networks'],
  [1, 'tBridge', 'Bridges'],
  [1, 'tTurn', 'Turnouts and Crossovers', '+'],
  [1, 'tCorr', 'Corridors'],
  [1, 'tAsm', 'Assemblies', '+'],
  [1, 'tSub', 'Subassemblies', '+'],
  [1, 'tInt', 'Intersections'],
  [1, 'tSurvey', 'Survey', '+'],
];

const TreeRow: React.FC<{ node: Node }> = ({ node: [depth, icon, label, exp] }) => {
  const selected = depth === 4 && label === 'Point Groups';
  return (
    <li className="flex min-h-0 flex-1 items-center whitespace-nowrap">
      {Array.from({ length: depth }, (_, i) => (
        <span key={i} className="flex h-full w-[13px] shrink-0 justify-center">
          {i < 2 && <span className="border-l border-dashed border-[#a8a8a8]" />}
        </span>
      ))}
      <span className="flex h-full w-[13px] shrink-0 items-center justify-center">
        {exp ? (
          <button
            type="button"
            aria-label={exp === '+' ? `Expand ${label}` : `Collapse ${label}`}
            className="flex size-[7px] items-center justify-center border border-[#9c9c9c] bg-white"
          >
            <svg viewBox="0 0 5 5" className="size-[5px]">
              <path d={exp === '+' ? 'M1 2.5h3M2.5 1v3' : 'M1 2.5h3'} stroke="#555" />
            </svg>
          </button>
        ) : (
          <>
            <span className="ml-[6px] h-full border-l border-dashed border-[#a8a8a8]" />
            <span className="flex-1 border-t border-dashed border-[#a8a8a8]" />
          </>
        )}
      </span>
      <Icon name={icon} className="size-[12px]" />
      <span
        className={clsx(
          'ml-[2px] px-[2px] leading-3',
          depth === 0 && 'font-bold',
          selected && 'w-[66px] bg-[#8f8f8f]',
        )}
      >
        {label}
      </span>
    </li>
  );
};

const Chevron: React.FC<{ d: string }> = ({ d }) => (
  <svg viewBox="0 0 8 8" className="size-[6px] shrink-0" aria-hidden="true">
    <path d={d} fill="none" stroke="#333" strokeWidth="1.5" />
  </svg>
);

const HScroll: React.FC<{ thumb: string }> = ({ thumb }) => (
  <div className="flex h-3 shrink-0 items-center bg-[#f0f0f0] px-[3px] gap-1">
    <Chevron d="M6 0L2 4l4 4" />
    <div className="h-[10px] flex-1"><div className={clsx('h-full bg-[#c8c8c8]', thumb)} /></div>
    <Chevron d="M2 0l4 4-4 4" />
  </div>
);

const sideTabs = ['Prospector', 'Settings', 'Survey', 'Toolbox'];

const Toolspace = () => (
  <aside className="flex w-[178px] shrink-0 bg-[#3d4653] pb-[3px]">
    <div className="flex w-40 flex-col">
      <h2 className="flex h-[14px] shrink-0 items-center gap-1 bg-[#272c39] px-1">
        <span className="text-[#c7ccd3]">⁝</span>
        TOOLSPACE
      </h2>
      <div className="flex h-[21px] shrink-0 items-center px-[3px]">
        <IconButton name="refresh" label="Refresh" icon="size-[11px]" />
        <span className="flex-1" />
        <IconButton name="tree" label="Item view" className="w-[18px]" icon="size-[11px]" />
        <IconButton name="panel" label="Preview" className="w-[18px]" icon="size-[11px]" />
        <IconButton name="help" label="Help" className="w-3" icon="size-[11px]" />
      </div>
      <div className="mb-[3px] flex h-[14px] shrink-0 items-center bg-[#4a5466] px-[3px]">
        <select aria-label="View" className="h-[14px] flex-1 appearance-none bg-transparent leading-3 text-white">
          <option>Active Drawing View</option>
        </select>
        <Caret />
      </div>
      <div className="flex min-h-0 flex-1 bg-white text-[#222]">
        <ul className="flex min-w-0 flex-1 flex-col overflow-hidden pb-px pl-[3px] pt-px">
          {tree.map((node, i) => <TreeRow key={i} node={node} />)}
        </ul>
        <div className="flex w-[10px] shrink-0 flex-col items-center bg-[#f0f0f0] py-[3px]">
          <Chevron d="M0 6l4-4 4 4" />
          <div className="my-[3px] w-full flex-1"><div className="h-[80%] bg-[#c8c8c8]" /></div>
          <Chevron d="M0 2l4 4 4-4" />
        </div>
      </div>
      <HScroll thumb="w-[80%]" />
      <div className="mt-[6px] flex h-[61px] shrink-0 flex-col overflow-hidden bg-white text-[#222]">
        <table className="w-full table-fixed border-collapse text-left">
          <thead>
            <tr className="h-4">
              <th className="w-[101px] border-r border-[#ddd] pl-[5px] font-normal">Name</th>
              <th className="w-[43px] border-r border-[#ddd] pl-1 font-normal">Descript...</th>
              <th className="overflow-hidden pl-[3px] font-normal">Sty</th>
            </tr>
          </thead>
          <tbody className="bg-[#fdfbe3]">
            <tr className="h-[14px] border-y border-[#d9d5b8]">
              <td className="border-r border-[#d9c9b8]">
                <span className="flex items-center gap-3">
                  <Icon name="tGroups" className="ml-px size-[11px]" />
                  puntos topograficos
                </span>
              </td>
              <td className="border-r border-[#d9c9b8]" />
              <td className="overflow-hidden pl-px">Basi</td>
            </tr>
            <tr className="h-[13px] border-b border-[#c9a9a0]">
              <td className="border-r border-[#d9c9b8]" />
              <td className="border-r border-[#d9c9b8]" />
              <td />
            </tr>
          </tbody>
        </table>
        <div className="flex-1 bg-[#fdfbe3]" />
        <HScroll thumb="w-[57%]" />
      </div>
    </div>
    <div className="flex w-[14px] flex-col pt-[15px]">
      {sideTabs.map((tab, i) => (
        <button
          key={tab}
          type="button"
          className={clsx(
            'flex h-[81px] items-center justify-center border-b border-[#20252f] pl-px text-[#c4cad2]',
            i > 0 && 'bg-[#2a303d]',
          )}
        >
          <span className="rotate-180 [writing-mode:vertical-rl]">{tab}</span>
        </button>
      ))}
    </div>
  </aside>
);

const boundary =
  '458,171 500,157 533,162 570,177 605,192 685,223 752,255 812,279 828,342 812,380 790,428 762,493 734,553 709,611 683,636 620,625 562,602 483,568 402,531 367,518 333,456 359,380 365,362 380,338 403,287 432,235';

const contours: [points: string, color: string][] = [
  ['533,162 507,168 479,179 459,245 438,273 407,282', '#777'],
  ['630,202 595,208 588,203 565,201 553,202 545,224 517,252 475,309 415,330 380,338', '#777'],
  ['713,237 690,236 675,233 640,241 632,240 601,261 550,331 497,350 430,390 402,377 368,386 351,408', '#b8b8b8'],
  ['821,315 809,304 802,297 788,296 765,297 747,322 713,320 682,318 653,323 639,333 624,353 608,359 570,382 452,455 436,447 422,467 399,449 382,468 377,471 372,468 335,461', '#808080'],
  ['341,469 372,476 432,497 475,515 490,521 559,542 583,567 623,592 642,593 673,583 684,561 627,531 676,447 738,469 742,462 769,475', '#808080'],
  ['345,477 377,484 475,520 553,556 600,577 625,599 650,601 680,600 708,613', '#888'],
  ['349,485 373,491 453,522 553,567 600,589 622,607 650,611 670,610 696,623', '#888'],
  ['353,493 373,498 403,508 470,537 533,568 570,589 600,603 622,613 660,621 685,633', '#cfcfcf'],
  ['357,501 403,517 433,527 497,558 565,597 600,612 618,621', '#888'],
  ['362,509 417,529 480,560 520,580 543,592', '#888'],
  ['367,516 402,527 440,547 483,567', '#666'],
];

type SurveyPoint = [x: number, y: number, id: string, elev: string, code: string];

const surveyPoints: SurveyPoint[] = [
  [501, 157, '58', '3577.67', 'C'], [534, 162, '57', '3578.01', 'C'], [460, 171, '5', '3577.67', 'C'],
  [489, 181, '38', '3578.17', 'C'], [497, 182, '8', '3578.12', 'P'], [524, 183, '37', '3578.51', 'C'],
  [432, 236, '49', '3577.61', 'C'], [470, 234, '39', '3578.08', 'C'], [469, 247, '9', '3578.11', 'P'],
  [406, 288, '50', '3578.04', 'C'], [443, 287, '40', '3578.14', 'C'], [444, 299, '10', '3578.54', 'P'],
  [416, 341, '41', '3579.82', 'C'], [366, 370, '51', '3579.89', 'C'], [402, 381, '11', '3580.10', 'P'],
  [378, 416, '42', '3580.80', 'C'], [335, 456, '52', '3580.49', 'C'], [372, 467, '12', '3580.85', 'P'],
  [430, 491, '25', '3581.25', 'C'], [472, 512, '26', '3581.89', 'C'], [568, 527, '30', '3581.48', 'L'],
  [556, 555, '27', '3582.42', 'C'], [373, 506, '13', '3584.27', 'P'], [368, 518, '60', '3588.23', 'C'],
  [401, 530, '14', '3585.25', 'P'], [484, 567, '15', '3587.84', 'P'], [563, 602, '16', '3586.31', 'P'],
  [621, 625, '17', '3585.43', 'C'], [658, 623, '18', '3585.35', 'P'], [685, 636, '1', '3585.38', 'C'],
  [711, 611, '43', '3582.76', 'C'], [684, 597, '19', '3582.76', 'P'], [650, 595, '28', '3582.28', 'C'],
  [630, 587, '61', '3581.28', 'P'], [667, 576, '29', '3581.81', 'L'], [735, 555, '44', '3582.61', 'C'],
  [699, 536, '60', '3582.81', 'C'], [708, 541, '20', '3582.61', 'P'], [735, 481, '21', '3582.11', 'P'],
  [762, 494, '45', '3582.11', 'C'], [791, 429, '46', '3581.72', 'C'], [757, 412, '31', '3581.47', 'L'],
  [764, 415, '22', '3581.72', 'P'], [813, 380, '47', '3581.39', 'C'], [786, 366, '23', '3581.39', 'P'],
  [830, 342, '48', '3581.53', 'C'], [804, 329, '24', '3581.33', 'P'], [803, 300, '33', '3580.75', 'C'],
  [814, 279, '53', '3580.55', 'C'], [752, 254, '54', '3580.26', 'C'], [740, 275, '34', '3580.76', 'C'],
  [710, 273, '5', '3580.58', 'P'], [710, 276, '', '3580.60', 'P'], [683, 222, '55', '3579.73', 'C'],
  [672, 243, '35', '3580.23', 'C'], [648, 247, '6', '3580.17', 'P'], [603, 191, '56', '3578.61', 'C'],
  [592, 213, '36', '3579.11', 'C'], [577, 216, '7', '3579.07', 'P'], [657, 363, '32', '3581.43', 'L'],
];

const Drawing = () => (
  <svg className="absolute inset-0 size-full" role="img" aria-label="Surface superficie">
    <g transform="translate(-178 -122)">
      {contours.map(([points, color]) => (
        <polyline key={points} points={points} fill="none" stroke={color} strokeWidth="1" />
      ))}
      <polygon points={boundary} fill="none" stroke="#2fc46c" strokeWidth="1.2" />
      {surveyPoints.map(([x, y, id, elev, code], i) => (
        <g key={i} fontSize="6" fill="#e2697a" fontFamily='"Liberation Sans", sans-serif'>
          <path d={`M${x - 4} ${y - 2}l5 5m0-5l-5 5`} stroke="#8c0f1b" fill="none" />
          <text x={x + 1} y={y - 3}>{id}</text>
          <text x={x} y={y + 2}>{elev}</text>
          <text x={x + 1} y={y + 7}>{code}</text>
        </g>
      ))}
      <g stroke="#e8e8e8" fill="none">
        <path d="M568.5 372.5h31M603.5 372.5h30M601 340v30M601 375v30" />
        <path d="M599 370.5h4v4h-4z" />
        <path d="M191.500 624v30M195 657.500h30M188.500 654.500h6v6h-6zM192 613l4 4 4-4M196 617v5M227 648l9 9M236 648l-9 9" />
      </g>
    </g>
  </svg>
);

const ViewCube = () => (
  <svg viewBox="0 0 100 124" className="absolute right-[5px] top-5 h-[124px] w-[100px]" role="img" aria-label="View cube">
    <circle cx="50" cy="50" r="36" fill="none" stroke="#333" strokeWidth="8" />
    <path d="M33 33h34v34H33z" fill="#b9b9b9" />
    <path d="M38 38h24v24H38z" fill="#aeb0b2" />
    <g fontFamily='"Liberation Sans", sans-serif' textAnchor="middle" fontWeight="bold" fill="#b5b5b5" fontSize="13">
      <text x="50" y="18">N</text>
      <text x="50" y="93">S</text>
      <text x="13" y="55">W</text>
      <text x="88" y="55">E</text>
      <text x="50" y="53" fontSize="8" fontWeight="normal" fill="#222">TOP</text>
    </g>
    <rect x="34" y="109" width="32" height="11" rx="3" fill="#8d8d8d" stroke="#b0b0b0" />
    <text x="37" y="117" fontSize="7" fill="#555" fontFamily='"Liberation Sans", sans-serif'>WCS</text>
  </svg>
);

const NavBar = () => (
  <svg viewBox="0 0 22 142" className="absolute right-[2px] top-[156px] h-[142px] w-[22px]" role="img" aria-label="Navigation bar">
    <rect width="22" height="142" rx="2" fill="#484848" />
    <g fill="none" stroke="#2a2a2a">
      <circle cx="18" cy="4" r="2" />
      <circle cx="12" cy="20" r="7" />
      <path d="M12 16a4 4 0 1 0 4 4M5 28h14" />
      <path d="M5 40c0-5 6-5 6 0v8H7zM12 44l6-4M5 50h12" />
      <path d="M4 58l14 14M18 58L4 72M4 62v-4h4M14 72h4v-4" />
      <path d="M12 84v20M3 94h18M9 87l3-3 3 3M9 101l3 3 3-3M6 91l-3 3 3 3M18 91l3 3-3 3" />
      <path d="M4 114h14v14H4zM7 118h8v6H7zM10 112v18" />
      <circle cx="18" cy="138" r="2" />
    </g>
  </svg>
);

const CommandLine = () => (
  <div className="absolute bottom-px left-[25%] flex h-4 w-1/2 items-center bg-[#3f3f3f]">
    <span className="ml-1 h-3 w-1 border-x border-dotted border-[#aaa]" />
    <button type="button" aria-label="Close command line" className="ml-[2px] flex w-3 justify-center">
      <svg viewBox="0 0 6 6" className="size-[6px]"><path d="M0 0l6 6M6 0L0 6" stroke={W} /></svg>
    </button>
    <IconButton name="wrench" label="Customize" className="w-[17px]" icon="size-[10px]" />
    <div className="flex h-full flex-1 items-center bg-[#b3b3b3] px-[3px]">
      <Icon name="prompt" className="size-[11px]" />
      <Caret className="ml-[1px] text-[#333]" />
      <input
        aria-label="Command"
        placeholder="Type a command"
        className="ml-1 h-4 flex-1 bg-transparent font-['DejaVu_Sans_Mono',monospace] text-[8px] italic placeholder:text-[#4c4c4c]"
      />
      <Caret className="rotate-180 text-[#444]" />
    </div>
  </div>
);

const Viewport = () => (
  <main className="relative min-w-0 flex-1 overflow-hidden bg-black">
    <Drawing />
    <span className="absolute left-[2px] top-1 leading-[10px] text-[#dcdcdc]">[−][Top][2D Wireframe]</span>
    <div className="absolute right-[6px] top-[6px] flex gap-[5px]">
      {['M1 6h6', 'M1 3h4v4H1zM3 3V1h4v4H5', 'M1 1l6 6M7 1L1 7'].map((d) => (
        <button key={d} type="button" aria-label="Viewport control" className="flex">
          <svg viewBox="0 0 8 8" className="size-2"><path d={d} fill="none" stroke="#fff" strokeWidth="1.6" /></svg>
        </button>
      ))}
    </div>
    <ViewCube />
    <NavBar />
    <div className="absolute left-[436px] top-[267px] flex h-4 w-[136px] items-center rounded-[2px] bg-[#ececec] px-[6px] text-[#444]">
      <Icon name="tri" className="size-[11px]" />
      <span className="ml-[6px]">superficie</span>
      <span className="ml-2">Z</span>
      <span className="ml-[10px]">3581.117m</span>
    </div>
    <CommandLine />
  </main>
);

const rightTools = [
  '=', 'r0', 'r1', 'r2', 'r3', 'r4', 'r5', 'r6', 'r7', 'r8', 'r9', 'r7', 'r10', 'r11', '-', 'r12', '-',
  'r13', 'r14', 'r7', '-', 'r15', 'r16', 'r17', 'r18', 'r19', 'r20', 'r21', '=', 'r12', 'r22', 'r8',
];

const RightToolbar = () => (
  <div className="w-[22px] shrink-0 bg-[#3d4653]">
    <div className="flex h-[421px] w-[21px] flex-col items-center border-r border-[#2a303c]">
      {rightTools.map((name, i) => {
        if (name === '-') return <span key={i} className="flex w-3 flex-1 items-center"><i className="h-px w-full bg-[#cfd3d8]" /></span>;
        if (name === '=') return <span key={i} className="flex w-3 flex-1 items-center"><i className="w-full border-t-2 border-dotted border-[#9aa1ab]" /></span>;
        return <IconButton key={i} name={name} label={`Tool ${i}`} className="min-h-0 flex-[3]" icon="size-[12px]" />;
      })}
    </div>
  </div>
);

const StatusIcon: React.FC<{ name: string; caret?: boolean; active?: boolean }> = ({ name, caret, active }) => (
  <>
    <IconButton name={name} label={name} icon="size-[11px]" className={clsx('w-4', active && 'bg-[#4f86b8]')} />
    {caret && <span className="flex w-[13px] items-center justify-center border-r border-[#232834]"><Caret /></span>}
  </>
);

const StatusBar = () => (
  <footer className="flex h-5 shrink-0 items-center justify-between bg-[#232834]">
    <div className="flex h-full items-center">
      <IconButton name="menu" label="Layouts" className="w-8" icon="size-[11px]" />
      <button type="button" className="h-full w-9 bg-[#3d4653] font-bold text-white [clip-path:polygon(5px_0,100%_0,calc(100%-5px)_100%,0_100%)]">
        Model
      </button>
      <button type="button" className="w-[45px]">Layout1</button>
      <button type="button" className="w-[45px]">Layout2</button>
      <IconButton name="plus" label="New layout" className="w-7" icon="size-[10px]" />
    </div>
    <div className="flex h-[17px] items-stretch bg-[#353d4a] pr-px">
      <button type="button" className="w-8 border-r border-[#232834] text-white">MODEL</button>
      <StatusIcon name="grid" />
      <StatusIcon name="dots" caret />
      <StatusIcon name="ortho" />
      <StatusIcon name="polar" caret />
      <StatusIcon name="iso" caret />
      <StatusIcon name="track" active />
      <StatusIcon name="osnap" active caret />
      <StatusIcon name="annVis" active />
      <StatusIcon name="annAdd" />
      <StatusIcon name="ann" />
      <button type="button" className="flex w-9 items-center justify-center gap-1 border-r border-[#232834]">1:200<Caret /></button>
      <StatusIcon name="gear" caret />
      <StatusIcon name="plus" />
      <StatusIcon name="shapes" />
      <StatusIcon name="globe" />
      <button type="button" className="w-8 border-r border-[#232834]">3.500</button>
      <StatusIcon name="isolate" caret />
      <StatusIcon name="leaf" active />
      <StatusIcon name="screen" />
      <StatusIcon name="menu" />
    </div>
  </footer>
);

const Scenery = () => (
  <svg viewBox="0 0 51 26" className="h-[26px] w-[51px]" preserveAspectRatio="none" aria-hidden="true">
    <path d="M4 4C10 0 20 0 26 0h25v26H8C2 22-2 14 4 4z" fill="#6cc4dc" />
    <path d="M4 6l9-4 8 3-5 5-9 3z" fill="#a9e2ee" />
    <path d="M3 12l8-6 6 5 5-4 8 8v11H8z" fill="#2f9ab3" />
    <path d="M1 16c8-3 18-2 26 1v9H8c-4-2-7-6-7-10z" fill="#38b9b4" />
    <path d="M29 0h14l2 14-6 6-7-4z" fill="#6b4a55" />
    <path d="M33 0h3v12h-3zM39 0h2v11h-2z" fill="#8a6570" />
    <path d="M37 14c3-4 6-1 8-6s5-3 6-2v20H33c0-4 1-8 4-12z" fill="#4aa345" />
    <path d="M41 18c3-3 5 0 10-3v11H38z" fill="#86cf5b" />
    <path d="M24 26l4-12 6 12z" fill="#b5622f" />
    <path d="M26 18l3-4 2 12h-3z" fill="#de9250" />
    <path d="M22 2l8 4-2 9-7-6z" fill="#3d8f57" />
  </svg>
);

const apps = ['taskview', 'copilot', 'store', 'excel', 'edge', 'chrome', 'folder', 'outlook', 'word', 'R', 'C', 'obs', 'player'];
const running = ['chrome', 'folder', 'word', 'R', 'C', 'obs', 'player'];

const Taskbar = () => (
  <div className="flex h-[27px] shrink-0 items-stretch bg-[#1c1e28]">
    <IconButton name="windows" label="Start" className="w-8" icon="size-[11px]" />
    <label className="flex w-48 items-center bg-[#f3f3f3] pl-2 text-[#333]">
      <svg viewBox="0 0 12 12" className="size-3" aria-hidden="true">
        <path d="M1 11l4-4M7 8a3.5 3.5 0 1 0 0-7 3.5 3.5 0 0 0 0 7z" fill="none" stroke="#222" />
      </svg>
      <input aria-label="Buscar" placeholder="Buscar" className="ml-[7px] w-20 flex-1 bg-transparent text-[10px] placeholder:text-[#444]" />
      <Scenery />
    </label>
    <div className="flex">
      {apps.map((app) => (
        <button
          key={app}
          type="button"
          aria-label={app}
          className={clsx(
            'flex w-[33px] items-center justify-center border-b-2',
            running.includes(app) ? 'border-[#76b9ed]' : 'border-transparent',
            app === 'C' && 'bg-[#43454f]',
          )}
        >
          {app === 'R' && <span className="flex size-4 items-center justify-center bg-[#1f6fd0] text-[9px] font-bold text-white">R</span>}
          {app === 'C' && <span className="flex size-4 items-center justify-center bg-[#c2128a] text-[9px] font-bold text-white">C</span>}
          {app.length > 1 && <Icon name={app} className={app === 'taskview' ? 'size-[11px]' : 'size-4'} />}
        </button>
      ))}
    </div>
    <div className="ml-auto flex items-center text-white">
      <IconButton name="up" label="Hidden icons" className="w-4" icon="size-[10px]" />
      <IconButton name="meet" label="Meet now" className="w-4" icon="size-[11px]" />
      <IconButton name="net" label="Network" className="w-4" icon="size-[11px]" />
      <IconButton name="sound" label="Volume" className="w-4" icon="size-[11px]" />
      <button type="button" className="w-6">ESP</button>
      <div className="w-[46px] text-center leading-3">
        <div>09:41</div>
        <div>18/08/2025</div>
      </div>
      <button type="button" aria-label="Notifications" className="ml-[6px] mr-[10px] flex">
        <svg viewBox="0 0 18 18" className="size-[18px]">
          <path d="M2 3h12v9H8l-3 3v-3H2z" fill="#fff" />
          <path d="M4 5h8M4 7h8M4 9h5" stroke="#1c1e28" />
          <circle cx="12" cy="12" r="5" fill="#2c2e39" stroke="#aaa" />
          <text x="10" y="15" fontSize="8" fill="#fff">1</text>
        </svg>
      </button>
      <span className="mr-[2px] h-full w-px bg-[#50525c]" />
    </div>
  </div>
);

export default function App() {
  return (
    <div className="flex h-screen w-full flex-col overflow-hidden bg-[#242935] font-[Roboto,'Noto_Sans',sans-serif] text-[8px] leading-3 text-[#e3e6ea]">
      <TitleBar />
      <RibbonTabs />
      <Ribbon />
      <DocumentTabs />
      <div className="flex min-h-0 flex-1 border-b-2 border-t-[3px] border-[#3d4653]">
        <Toolspace />
        <Viewport />
        <RightToolbar />
      </div>
      <StatusBar />
      <Taskbar />
    </div>
  );
}
